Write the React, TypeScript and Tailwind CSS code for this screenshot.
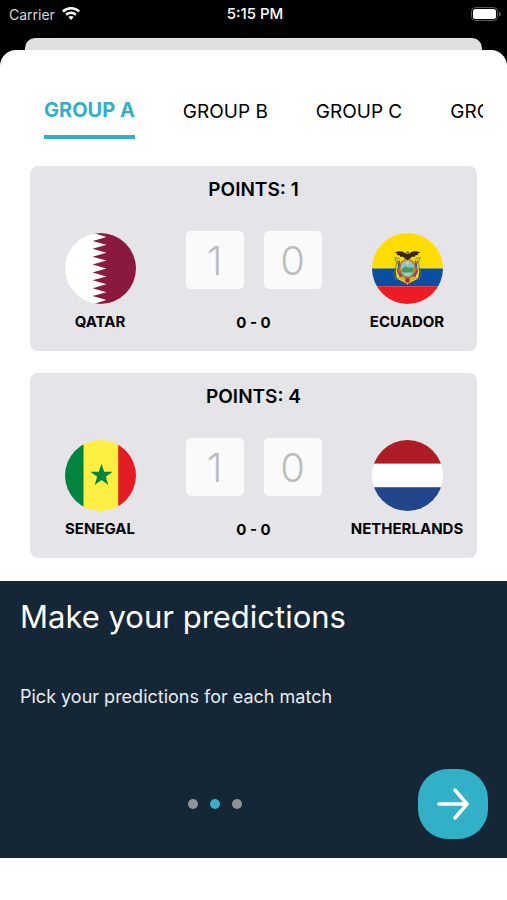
import { useState, type ReactNode } from "react";

type Team = { name: string; flag: ReactNode };
type Match = { points: number; home: Team; away: Team; picks: [string, string] };

const groups = ["GROUP A", "GROUP B", "GROUP C", "GROUP D"];

const QatarFlag = () => (
  <svg viewBox="0 0 72 72" className="size-full" aria-hidden="true">
    <path fill="#fff" d="M0 0h44v72H0z" />
    <path
      fill="#8a1a3d"
      d="M72 0H29L42 4 28 8 42 12 28 16 42 20 28 24 42 28 28 32 42 36 28 40 42 44 28 48 42 52 28 56 42 60 28 64 42 68 29 72H72z"
    />
  </svg>
);

const EcuadorFlag = () => (
  <svg viewBox="0 0 72 72" className="size-full" aria-hidden="true">
    <path fill="#ffdd00" d="M0 0h72v36H0z" />
    <path fill="#0a4ea2" d="M0 36h72v18H0z" />
    <path fill="#ed1c24" d="M0 54h72v18H0z" />
    {/* side banners */}
    <path
      fill="none"
      stroke="#f5d327"
      strokeWidth="4"
      strokeLinecap="round"
      strokeLinejoin="round"
      d="M25 28l3 5-2 6 1 6 6 3M47 28l-3 5 2 6-1 6-6 3"
    />
    <path
      fill="none"
      stroke="#6f7a2c"
      strokeWidth="0.8"
      strokeLinejoin="round"
      d="M28 26l-5-1 2 5-1 5-2 6 2 6 4-1M44 26l5-1-2 5 1 5 2 6-2 6-4-1"
    />
    <path stroke="#2b5fa8" strokeWidth="1.2" fill="none" d="M26 28l1 5-1 6 3 6M46 28l-1 5 1 6-3 6" />
    <path stroke="#c9322c" strokeWidth="1.2" fill="none" d="M28 28l0 6-1 5 3 7M44 28l0 6 1 5-3 7" />
    {/* fasces */}
    <path fill="#e0b02c" d="M29 44h14v4l-3 0-1 3h-2l-1 2-1-2h-2l-1-3h-3z" />
    <path fill="#a8231f" d="M34 46h4v4h-4z" />
    {/* shield */}
    <ellipse cx="36" cy="36" rx="8.5" ry="10" fill="#b5652f" />
    <ellipse cx="36" cy="36" rx="7.2" ry="8.7" fill="#d8c476" />
    <ellipse cx="36" cy="36" rx="6.4" ry="8" fill="#7cc4e8" />
    <path fill="#4f9a55" d="M29.600 37l4-3 3 1 5.800 0c.5 5-2 8-4.400 9h-4c-2.400-1-4.400-4-4.400-7z" />
    <path fill="#8fd0dc" d="M30.500 40h11l-3 3.600h-5z" />
    <circle cx="36" cy="30.5" r="1.6" fill="#f7d629" />
    {/* condor */}
    <path
      fill="#38271b"
      d="M23 20c4-2 8-2 11 1l1-2h2l1 2c3-3 7-3 11-1l-3 1 1 1.200-3 .3-.5 1.500-3 .2-2 2-1.500.3L36 28l-1-1.500-1.500-.3-2-2-3-.2-.5-1.500-3-.3 1-1.200z"
    />
    <path fill="#f1ead8" d="M35 20h2v1h-2z" />
  </svg>
);

const SenegalFlag = () => (
  <svg viewBox="0 0 72 72" className="size-full" aria-hidden="true">
    <path fill="#00853f" d="M0 0h19v72H0z" />
    <path fill="#ffef42" d="M19 0h36v72H19z" />
    <path fill="#e31b23" d="M54 0h18v72H54z" />
    <path
      fill="#00853f"
      d="M37 24l2.700 8.300h8.600l-7 5 2.700 8.300-7-5.100-7 5.100 2.700-8.300-7-5h8.600z"
    />
  </svg>
);

const NetherlandsFlag = () => (
  <svg viewBox="0 0 72 72" className="size-full" aria-hidden="true">
    <path fill="#ae1c28" d="M0 0h72v24H0z" />
    <path fill="#fff" d="M0 24h72v24H0z" />
    <path fill="#21468b" d="M0 48h72v24H0z" />
  </svg>
);

const matches: Match[] = [
  {
    points: 1,
    home: { name: "QATAR", flag: <QatarFlag /> },
    away: { name: "ECUADOR", flag: <EcuadorFlag /> },
    picks: ["1", "0"],
  },
  {
    points: 4,
    home: { name: "SENEGAL", flag: <SenegalFlag /> },
    away: { name: "NETHERLANDS", flag: <NetherlandsFlag /> },
    picks: ["1", "0"],
  },
];

const StatusBar = () => (
  <div className="grid h-[38px] grid-cols-3 items-start pt-1 pr-[6px] pl-[9px] text-white">
    <div className="flex h-5 items-center gap-[7px] text-[14px] text-[#d8d8d8]">
      <span>Carrier</span>
      <svg viewBox="0 0 18 14" className="h-[14px] w-[18px]" fill="#fff" aria-label="Wi-Fi">
        <path d="M9 0C5.600 0 2.400 1.300 0 3.600l1.700 1.800A10.500 10.500 0 0 1 9 2.500c2.800 0 5.400 1.100 7.300 2.900L18 3.600A13 13 0 0 0 9 0z" />
        <path d="M9 4.600c-2.200 0-4.200.9-5.700 2.300L5 8.700a5.800 5.800 0 0 1 8 0l1.700-1.800A8.200 8.200 0 0 0 9 4.600z" />
        <path d="M9 9c-1 0-1.900.4-2.600 1.100L9 13l2.600-2.900A3.800 3.800 0 0 0 9 9z" />
      </svg>
    </div>
    <p className="h-5 text-center text-[15px] leading-5 font-medium whitespace-nowrap">5:15 PM</p>
    <div className="flex h-5 items-center justify-end">
      <svg viewBox="0 0 30 14" className="h-[14px] w-[30px]" aria-label="Battery full">
        <rect x="0.5" y="0.5" width="26" height="13" rx="4" fill="none" stroke="#5a5a5a" />
        <rect x="2" y="2" width="23" height="10" rx="2.5" fill="#fff" />
        <path fill="#5a5a5a" d="M28 4.500c1.400.5 2 1.400 2 2.500s-.6 2-2 2.500z" />
      </svg>
    </div>
  </div>
);

const TeamBadge = ({ name, flag }: Team) => (
  <div className="flex w-[140px] flex-col items-center gap-2 pt-[2px]">
    <div className="size-[71px] overflow-hidden rounded-full">{flag}</div>
    <p className="text-[15px] leading-5 font-bold">{name}</p>
  </div>
);

const ScoreInput = ({ label, pick }: { label: string; pick: string }) => (
  <input
    type="text"
    inputMode="numeric"
    maxLength={2}
    placeholder={pick}
    aria-label={label}
    className="size-[58px] rounded-[5px] bg-[#fafafa] text-center text-[40px] leading-none font-light text-black outline-none placeholder:text-[#bdbdbd] placeholder:opacity-100"
  />
);

const MatchCard = ({ points, home, away, picks }: Match) => (
  <article className="rounded-lg bg-[#e5e4e9] pt-3 pb-[18px]">
    <h2 className="text-center text-[19px] leading-6 font-semibold">POINTS: {points}</h2>
    <div className="mt-[29px] flex justify-between">
      <TeamBadge {...home} />
      <div className="flex flex-col items-center">
        <div className="flex gap-5">
          <ScoreInput label={`${home.name} goals`} pick={picks[0]} />
          <ScoreInput label={`${away.name} goals`} pick={picks[1]} />
        </div>
        <p className="mt-6 text-[15px] leading-5 font-bold">0 - 0</p>
      </div>
      <TeamBadge {...away} />
    </div>
  </article>
);

const GroupTabs = () => {
  const [active, setActive] = useState(0);

  return (
    <div role="tablist" className="mr-6 ml-11 flex gap-12 overflow-x-auto [scrollbar-width:none]">
      {groups.map((group, i) => (
        <button
          key={group}
          type="button"
          role="tab"
          aria-selected={i === active}
          onClick={() => setActive(i)}
          className={
            i === active
              ? "shrink-0 border-b-4 border-[#34afc6] pb-[13px] text-[20px] leading-6 font-bold text-[#34afc6]"
              : "shrink-0 border-b-4 border-transparent pt-[2px] pb-[11px] text-[19px] leading-6"
          }
        >
          {group}
        </button>
      ))}
    </div>
  );
};

const Intro = () => (
  <section className="bg-[#152737] pt-4 pb-[19px] text-white">
    <div className="px-5">
      <h1 className="text-[31px] leading-10">Make your predictions</h1>
      <p className="mt-12 text-[18px] leading-6 text-[#e8edf2]">Pick your predictions for each match</p>
    </div>
    <div className="mt-[60px] flex items-center pr-[19px] pl-[11px]">
      <div className="flex flex-1 justify-center gap-3">
        <span className="size-[10px] rounded-full bg-[#909298]" />
        <span className="size-[10px] rounded-full bg-[#34afc6]" />
        <span className="size-[10px] rounded-full bg-[#909298]" />
      </div>
      <button
        type="button"
        aria-label="Next"
        className="flex size-[70px] items-center justify-center rounded-[30px] bg-[#32b0c8]"
      >
        <svg
          viewBox="0 0 32 32"
          className="size-8"
          fill="none"
          stroke="#fff"
          strokeWidth="3.5"
          strokeLinecap="round"
          strokeLinejoin="round"
          aria-hidden="true"
        >
          <path d="M2 16h28M18 2l12 14-12 14" />
        </svg>
      </button>
    </div>
  </section>
);

export default function App() {
  return (
    <div className="flex min-h-screen flex-col bg-black font-[Inter,sans-serif] text-black">
      <StatusBar />
      <div className="mx-[25px] h-3 rounded-t-[10px] bg-[#e0e0e0]" />
      <main className="flex-1 rounded-t-[16px] bg-white pt-12">
        <GroupTabs />
        <div className="mt-[27px] flex flex-col gap-[22px] px-[30px] pb-[23px]">
          {matches.map((match) => (
            <MatchCard key={match.home.name} {...match} />
          ))}
        </div>
        <Intro />
      </main>
    </div>
  );
}
